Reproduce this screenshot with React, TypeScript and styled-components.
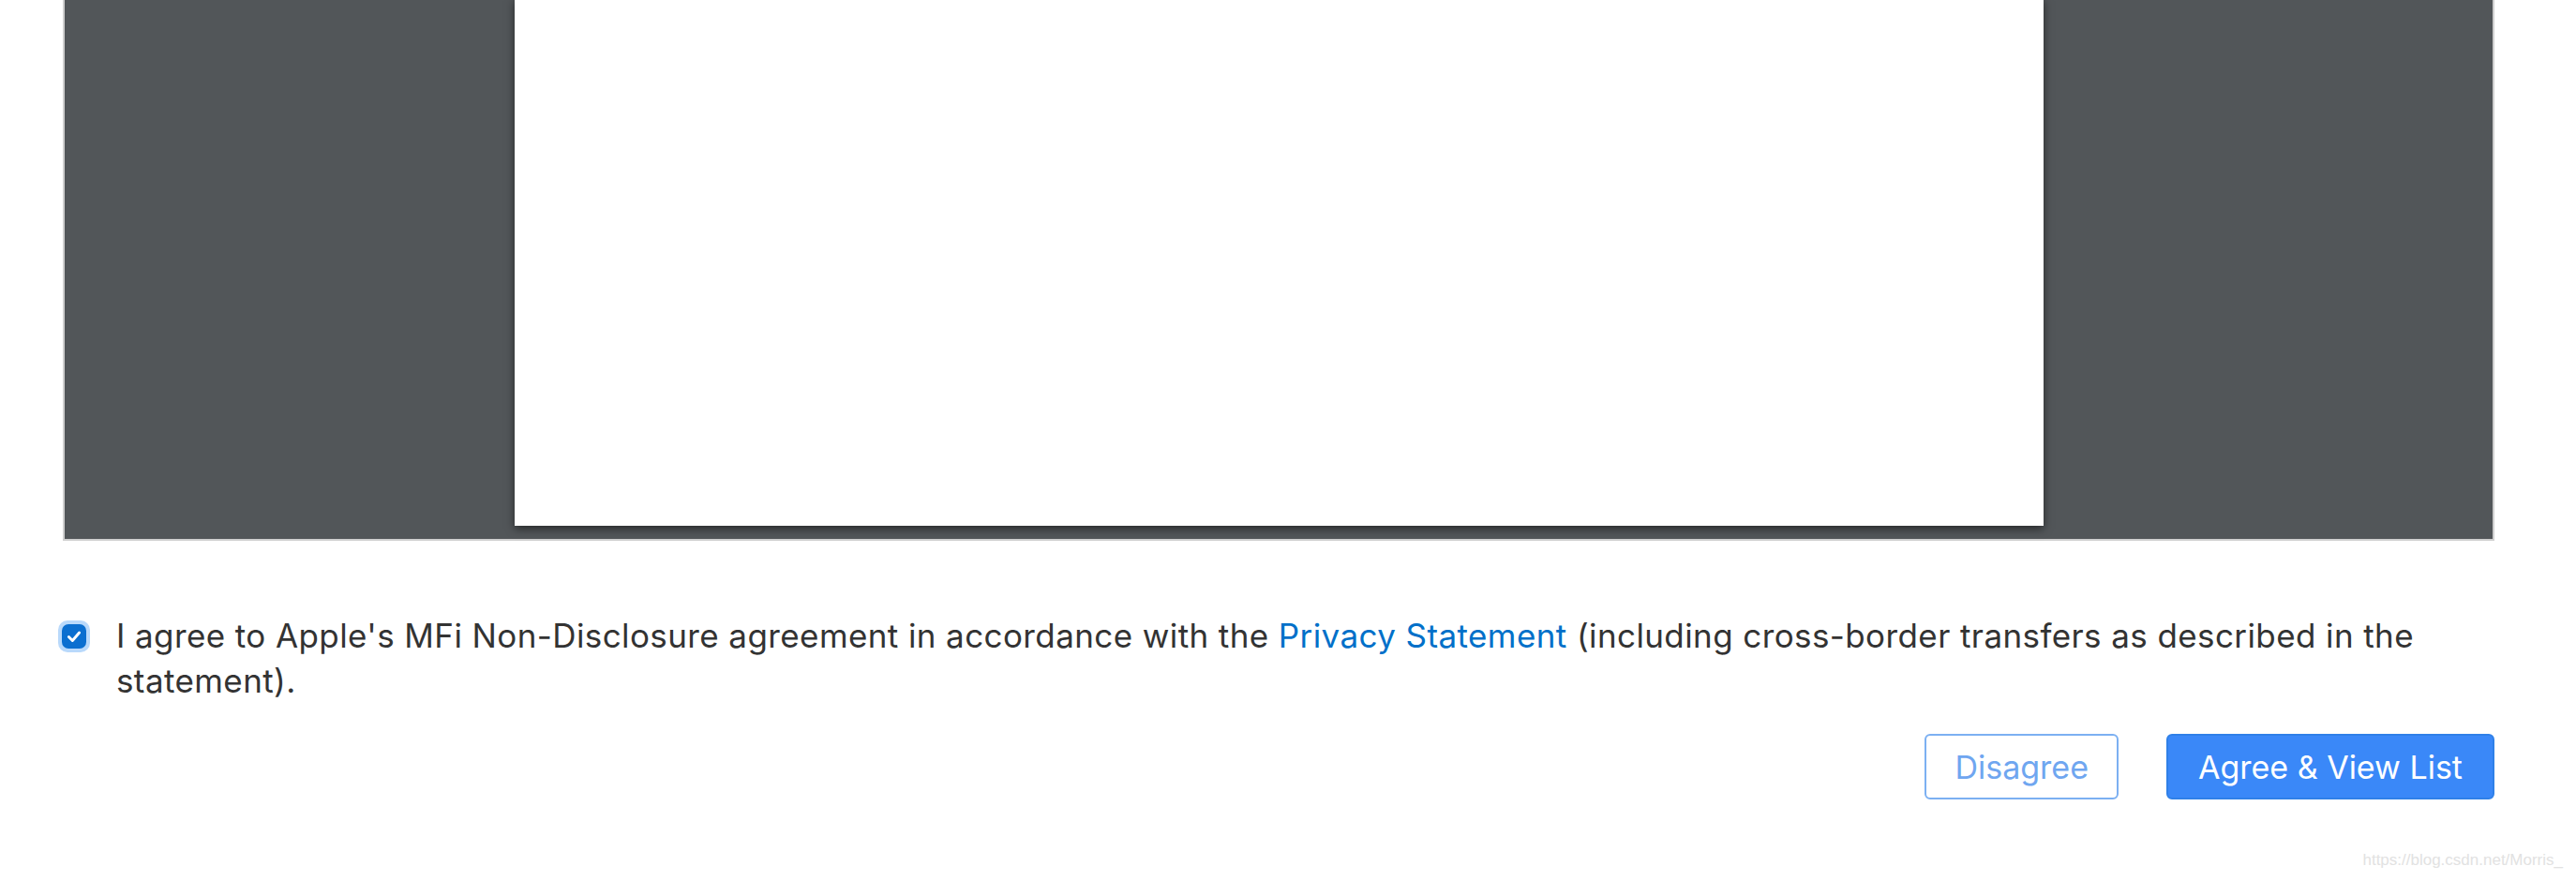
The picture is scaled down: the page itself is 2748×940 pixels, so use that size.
import React from "react";
import styled, { createGlobalStyle } from "styled-components";

const Global = createGlobalStyle`
  html, body { margin: 0; padding: 0; background: #ffffff; }
  body { font-family: Inter, "Open Sans", "Liberation Sans", sans-serif; }
`;

const Page = styled.div`
  width: 2748px;
  height: 940px;
  box-sizing: border-box;
  padding: 0 87px 0 67px;
  display: flex;
  flex-direction: column;
  position: relative;
  overflow: hidden;
`;

const Viewer = styled.div`
  height: 577px;
  box-sizing: border-box;
  background: #525659;
  border: 2px solid #cfcfcf;
  border-top: none;
  display: flex;
  justify-content: center;
  align-items: flex-end;
  padding-bottom: 14px;
`;

const Sheet = styled.div`
  width: 1631px;
  height: 563px;
  background: #ffffff;
  box-shadow: 0 3px 9px rgba(0, 0, 0, 0.55);
`;

const AgreeRow = styled.label`
  display: flex;
  align-items: flex-start;
  gap: 28px;
  margin-top: 78px;
  margin-left: -5px;
  font-size: 35px;
  letter-spacing: 0.4px;
  line-height: 47.5px;
  color: #333333;
`;

const Check = styled.span`
  flex: none;
  width: 34px;
  height: 34px;
  margin-top: 7px;
  border-radius: 10px;
  background: #b9d9fb;
  display: flex;
  align-items: center;
  justify-content: center;
`;

const CheckInner = styled.span`
  width: 26px;
  height: 26px;
  border-radius: 7px;
  background: #0b6fd0;
  display: flex;
  align-items: center;
  justify-content: center;
`;

const Label = styled.span`
  flex: 1;
`;

const Link = styled.a`
  color: #0070c9;
  text-decoration: none;
`;

const Actions = styled.div`
  display: flex;
  justify-content: flex-end;
  gap: 51px;
  margin-top: 33px;
`;

const Button = styled.button<{ $primary?: boolean }>`
  height: 70px;
  box-sizing: border-box;
  padding: 0 ${(p) => (p.$primary ? "32px" : "30px")};
  border-radius: 6px;
  font-family: Inter, "Open Sans", "Liberation Sans", sans-serif;
  font-size: 34px;
  cursor: pointer;
  border: 2px solid ${(p) => (p.$primary ? "#2f80e8" : "#7cb0f2")};
  background: ${(p) => (p.$primary ? "#3a88f8" : "#ffffff")};
  color: ${(p) => (p.$primary ? "#ffffff" : "#6fa6f0")};
`;

const Watermark = styled.div`
  position: absolute;
  right: 14px;
  bottom: 12px;
  font-family: "Liberation Sans", sans-serif;
  font-size: 17px;
  color: #e2e2e2;
`;

export default function App() {
  return (
    <>
      <Global />
      <Page>
        <Viewer>
          <Sheet />
        </Viewer>
        <AgreeRow>
          <Check>
            <CheckInner>
              <svg width="18" height="18" viewBox="0 0 16 16">
                <path d="M3 8.5 L6.5 12 L13 4.5" fill="none" stroke="#fff" strokeWidth="2.6" strokeLinecap="round" strokeLinejoin="round" />
              </svg>
            </CheckInner>
          </Check>
          <Label>
            I agree to Apple's MFi Non-Disclosure agreement in accordance with the{" "}
            <Link href="#">Privacy Statement</Link> (including cross-border transfers as described in the
            statement).
          </Label>
        </AgreeRow>
        <Actions>
          <Button>Disagree</Button>
          <Button $primary>Agree &amp; View List</Button>
        </Actions>
        <Watermark>https://blog.csdn.net/Morris_</Watermark>
      </Page>
    </>
  );
}
